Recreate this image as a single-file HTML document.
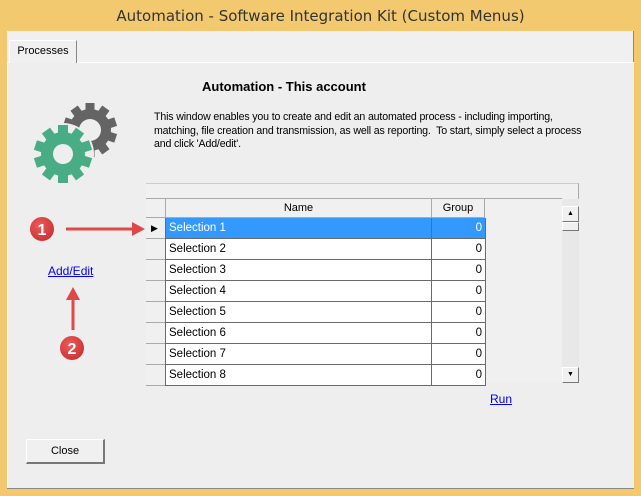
<!DOCTYPE html>
<html><head><style>
*{margin:0;padding:0;box-sizing:border-box}
body{width:641px;height:496px;background:#f2c96e;font-family:"Liberation Sans",sans-serif;font-size:11px;position:relative;overflow:hidden}
.a{position:absolute}
.title{left:0;top:0;width:641px;height:31px;text-align:center;line-height:33px;font-size:15px;color:#333;font-family:"DejaVu Sans","Liberation Sans",sans-serif}
.client{left:7px;top:31px;width:627px;height:458px;background:#f0f0f0;border-bottom:1px solid #888;border-right:1px solid #888}
.tab{left:9px;top:40px;width:68px;height:23px;background:#f0f0f0;border:1px solid #fff;border-right:1px solid #888;border-bottom:none;line-height:21px;text-align:center;font-size:11px}
.panel{left:7px;top:62px;width:627px;height:426px;background:#eeeeee;border-top:1px solid #fff;border-left:1px solid #fff}
.cell{position:absolute;border-right:1px solid #6a6a6a;border-bottom:1px solid #6a6a6a;height:21px;line-height:20px;padding:0 3px;font-size:11.5px;background:#fff}
a{color:#0000ee;text-decoration:underline}
</style></head><body>
<div class="a title">Automation - Software Integration Kit (Custom Menus)</div>
<div class="a client"></div>
<div class="a panel"></div>
<div class="a tab">Processes</div>
<div class="a" style="left:202px;top:79px;font-weight:bold;font-size:13px;">Automation - This account</div>
<div class="a" style="left:154px;top:111px;width:460px;line-height:13.5px;font-size:10.6px;letter-spacing:-0.15px;white-space:nowrap">This window enables you to create and edit an automated process - including importing,<br>matching, file creation and transmission, as well as reporting.&nbsp; To start, simply select a process<br>and click 'Add/edit'.</div>
<svg class="a" style="left:0;top:0" width="160" height="200" viewBox="0 0 160 200">
<g transform="translate(90,130)" fill="#646464">
<circle r="21"/>
<g id="tg"><rect x="-4.5" y="-27" width="9" height="10"/></g>
<use href="#tg" transform="rotate(36)"/><use href="#tg" transform="rotate(72)"/><use href="#tg" transform="rotate(108)"/><use href="#tg" transform="rotate(144)"/><use href="#tg" transform="rotate(180)"/><use href="#tg" transform="rotate(216)"/><use href="#tg" transform="rotate(252)"/><use href="#tg" transform="rotate(288)"/><use href="#tg" transform="rotate(324)"/>
<circle r="11" fill="#eeeeee"/>
</g>
<g transform="translate(63,154)">
<circle r="31" fill="#eeeeee"/>
<g fill="#48ad84">
<circle r="22"/>
<g id="tg2"><rect x="-5" y="-29" width="10" height="10"/></g>
<use href="#tg2" transform="rotate(36)"/><use href="#tg2" transform="rotate(72)"/><use href="#tg2" transform="rotate(108)"/><use href="#tg2" transform="rotate(144)"/><use href="#tg2" transform="rotate(180)"/><use href="#tg2" transform="rotate(216)"/><use href="#tg2" transform="rotate(252)"/><use href="#tg2" transform="rotate(288)"/><use href="#tg2" transform="rotate(324)"/>
</g>
<circle r="10" fill="#eeeeee"/>
</g>
</svg>
<div class="a" style="left:146px;top:183px;width:433px;height:200px;background:#f0f0f0;border-top:1px solid #ccc;border-right:1px solid #aaa"></div>
<div class="a" style="left:146px;top:198px;width:416px;height:1px;background:#aaa"></div>
<div class="a" style="left:146px;top:199px;width:19px;height:19px;background:#f0f0f0;border-bottom:1px solid #aaa"></div>
<div class="a" style="left:165px;top:199px;width:267px;height:19px;text-align:center;line-height:19px;border-right:1px solid #aaa;border-bottom:1px solid #aaa;border-left:1px solid #aaa">Name</div>
<div class="a" style="left:432px;top:199px;width:53px;height:19px;text-align:center;line-height:19px;border-right:1px solid #aaa;border-bottom:1px solid #aaa">Group</div>
<div id="rows"></div>
<div class="a" style="left:562px;top:199px;width:17px;height:184px;background:#e8e8e8"></div>
<div class="a" style="left:562px;top:206px;width:17px;height:16px;background:#f0f0f0;border:1px solid #fff;border-right-color:#777;border-bottom-color:#777;font-size:7px;text-align:center;line-height:13px">▲</div>
<div class="a" style="left:562px;top:222px;width:17px;height:9px;background:#f0f0f0;border:1px solid #fff;border-right-color:#777;border-bottom-color:#777"></div>
<div class="a" style="left:562px;top:367px;width:17px;height:16px;background:#f0f0f0;border:1px solid #fff;border-right-color:#777;border-bottom-color:#777;font-size:7px;text-align:center;line-height:14px">▼</div>
<a class="a" style="left:490px;top:392px;font-size:12px">Run</a>
<a class="a" style="left:48px;top:264px;font-size:12px">Add/Edit</a>
<svg class="a" style="left:0;top:200px" width="160" height="170">
<defs><radialGradient id="rg" cx="0.4" cy="0.35" r="0.7"><stop offset="0" stop-color="#ee5a5a"/><stop offset="1" stop-color="#c83232"/></radialGradient></defs>
<line x1="66" y1="29" x2="134" y2="29" stroke="#e04848" stroke-width="3"/>
<polygon points="132,22 145,29 132,36" fill="#e04848"/>
<circle cx="42" cy="29" r="12" fill="url(#rg)"/>
<text x="42" y="35" font-size="16" font-weight="bold" fill="#fff" text-anchor="middle" font-family="Liberation Sans">1</text>
<line x1="73" y1="130" x2="73" y2="98" stroke="#e04848" stroke-width="3"/>
<polygon points="66,100 73,87 80,100" fill="#e04848"/>
<circle cx="72" cy="148" r="12" fill="url(#rg)"/>
<text x="72" y="154" font-size="16" font-weight="bold" fill="#fff" text-anchor="middle" font-family="Liberation Sans">2</text>
</svg>
<div class="a" style="left:26px;top:439px;width:79px;height:25px;background:#f0f0f0;border:1px solid #fff;border-right:2px solid #777;border-bottom:2px solid #777;text-align:center;line-height:22px;font-size:11px">Close</div>
<script>
var h='';for(var i=0;i<8;i++){var y=218+i*21;var sel=i==0;
h+='<div class="a" style="left:146px;top:'+y+'px;width:19px;height:21px;background:#f0f0f0;border-bottom:1px solid #aaa;font-size:9px;line-height:20px;padding-left:5px">'+(sel?'▶':'')+'</div>';
h+='<div class="cell" style="left:165px;top:'+y+'px;width:267px;border-left:1px solid #6a6a6a;'+(sel?'background:#3399ff;color:#fff':'')+'">Selection '+(i+1)+'</div>';
h+='<div class="cell" style="left:432px;top:'+y+'px;width:54px;text-align:right;'+(sel?'background:#3399ff;color:#fff':'')+'">0</div>';}
document.getElementById('rows').innerHTML=h;
</script>
</body></html>
